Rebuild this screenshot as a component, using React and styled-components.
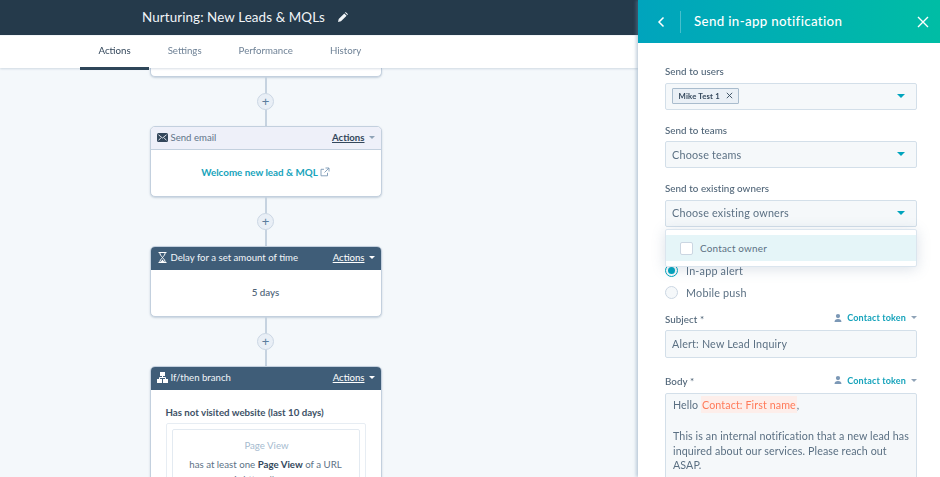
import React from "react";
import styled, { createGlobalStyle } from "styled-components";

const Global = createGlobalStyle`
  html, body { margin: 0; padding: 0; background: #f4f8fb; }
  body { font-family: "Lato", "Liberation Sans", sans-serif; color: #33475b; }
  * { box-sizing: border-box; }
`;

const Page = styled.div`
  width: 940px; height: 477px; overflow: hidden; display: flex; filter: blur(0.35px);
`;
const Main = styled.div`
  width: 638px; flex: none; display: flex; flex-direction: column; height: 100%;
`;
const TopBar = styled.header`
  height: 35px; flex: none; background: #253a4b; color: #f1f5f8; display: flex; align-items: center;
  padding-left: 142px; gap: 13px; font-size: 13.4px; letter-spacing: 0.1px; padding-bottom: 1px;
`;
const Tabs = styled.nav`
  height: 33px; flex: none; background: #fff; display: flex; padding-left: 80px;
  box-shadow: 0 1px 2px rgba(80,110,140,.22); position: relative; z-index: 2; border-top: 1px solid #f2f5f8;
`;
const Tab = styled.div`
  padding: 0 18.5px; font-size: 9.7px; line-height: 28px; height: 34px; white-space: nowrap;
  color: ${p => p.$active ? "#33475b" : "#6f8296"};
  border-bottom: 3px solid ${p => p.$active ? "#2f4659" : "transparent"};
`;
const Canvas = styled.main`
  flex: 1; min-height: 0; overflow: hidden; background: #f4f8fb; display: flex; flex-direction: column;
  align-items: flex-start; padding-left: 149.5px;
`;
const Flow = styled.div`
  width: 232px; display: flex; flex-direction: column; align-items: center;
`;
const Card = styled.section`
  width: 232px; flex: none; background: #fff; border: 1px solid #c3d0de; border-radius: 5px;
  box-shadow: 0 1px 2px rgba(90,120,150,.3); overflow: hidden;
`;
const StubCard = styled(Card)`
  height: 9px; border-top: 0; border-radius: 0 0 5px 5px;
`;
const CardHead = styled.div`
  height: 23px; display: flex; align-items: center; padding: 0 6px; gap: 3px; font-size: 9.6px; padding-bottom: 2px;
  background: ${p => p.$dark ? "#3f5d78" : "#eef0f9"};
  color: ${p => p.$dark ? "#f1f5f8" : "#5f7488"};
  border-bottom: 1px solid ${p => p.$dark ? "#3f5d78" : "#c3d0de"};
`;
const HeadTitle = styled.span`
  flex: 1; white-space: nowrap;
`;
const HeadActions = styled.span`
  font-size: 9.6px; text-decoration: underline; display: flex; align-items: center; margin-right: 1px;
  font-weight: ${p => p.$dark ? 400 : 700};
  color: ${p => p.$dark ? "#fff" : "#33475b"};
`;
const Caret = styled.i`
  display: inline-block; width: 0; height: 0; flex: none; border: ${p => p.$s || 3}px solid transparent; border-bottom: 0;
  border-top-color: ${p => p.$c || "#fff"};
`;
const CardBody = styled.div`
  height: 46px; display: flex; align-items: center; justify-content: center; gap: 2px; font-size: 9.8px;
  padding-bottom: 2px; color: ${p => p.$link ? "#16a3bb" : "#4d6276"}; font-weight: ${p => p.$link ? 700 : 500};
`;
const Connector = styled.div`
  width: 2px; height: 49px; background: #c6d3e0; display: flex; align-items: center; justify-content: center; flex: none;
`;
const Plus = styled.span`
  width: 17px; height: 17px; flex: none; border-radius: 50%; background: #e9eff6; border: 1px solid #cbd7e4;
  display: flex; align-items: center; justify-content: center; color: #5b7d9d; font-size: 13px; line-height: 1;
  font-family: "Liberation Sans", sans-serif;
`;
const BranchBody = styled.div`
  padding: 16px 15px 0; height: 200px;
`;
const BranchTitle = styled.div`
  font-size: 9.7px; font-weight: 700; color: #3d5166; margin-bottom: 5px; white-space: nowrap;
`;
const Outer = styled.div`
  border: 1px solid #e7edf3; border-radius: 2px; padding: 5px;
`;
const Inner = styled.div`
  border: 1px solid #e3eaf1; border-radius: 2px; text-align: center; padding: 9px 4px; font-size: 9.7px; color: #5d7286;
  height: 120px;
`;
const Muted = styled.div`
  color: #a6bbcf; margin-bottom: 7px; padding-left: 2px;
`;
const Line = styled.div`
  margin-bottom: 3px; white-space: nowrap; strong { color: #33475b; font-weight: 700; }
`;
const Panel = styled.aside`
  width: 302px; flex: none; height: 100%; background: #fff; display: flex; flex-direction: column;
  box-shadow: -2px 0 3px rgba(110,140,170,.4); position: relative; z-index: 3;
`;
const PanelHead = styled.header`
  height: 43px; flex: none; background: linear-gradient(90deg, #00a4bd, #00bda5); color: #fff;
  display: flex; align-items: center; padding-left: 19px; padding-right: 11px;
`;
const Divider = styled.span`
  width: 1px; height: 22px; background: rgba(255,255,255,.28); margin: 0 13px 0 15px;
`;
const PanelTitle = styled.h1`
  flex: 1; margin: 0 0 2px; font-size: 13.3px; font-weight: 500; letter-spacing: .35px; white-space: nowrap;
`;
const PanelBody = styled.div`
  flex: 1; min-height: 0; overflow: hidden; padding: 22px 23px 0 27px; position: relative;
`;
const Label = styled.label`
  display: flex; justify-content: space-between; align-items: center; font-size: 9.8px; color: #4f6477; height: 12px;
  margin-bottom: 5.5px; font-weight: 500; letter-spacing: .05px;
`;
const Select = styled.div`
  height: 27px; background: #f5f8fa; border: 1px solid #d3dfe9; border-radius: 2px; display: flex; align-items: center;
  padding: 0 11px 1px 6px; font-size: 10.8px; color: #5b7083; margin-bottom: 14px; letter-spacing: .2px;
`;
const SelectValue = styled.div`
  flex: 1; display: flex; align-items: center;
`;
const Chip = styled.span`
  height: 16px; border: 1px solid #a9bccd; background: #eaf0f6; border-radius: 1px; display: inline-flex; align-items: center;
  padding: 0 5px 0 5.5px; gap: 6px; font-size: 7.7px; font-weight: 700; color: #33475b;
`;
const Menu = styled.div`
  position: absolute; left: 27px; top: 186px; width: 252px; height: 38px; background: #fff; padding: 5px 0;
  border: 1px solid #dbe5ee; border-radius: 2px; box-shadow: 0 2px 14px rgba(90,120,150,.22); z-index: 2;
`;
const MenuItem = styled.div`
  height: 26px; background: #e5f5f8; display: flex; align-items: center; padding-left: 14px; gap: 7px; font-size: 9.9px; color: #5b7083;
  letter-spacing: .2px;
`;
const Check = styled.span`
  width: 13px; height: 13px; background: #fff; border: 1px solid #cbd6e2; border-radius: 2px;
`;
const Radios = styled.div`
  display: flex; flex-direction: column; gap: 8px; margin-top: 37px; margin-bottom: 13px;
`;
const Radio = styled.div`
  display: flex; align-items: center; gap: 8px; height: 14px; font-size: 10.8px; color: #5b7083; letter-spacing: .2px;
`;
const Dot = styled.span`
  width: 13px; height: 13px; border-radius: 50%; display: flex; align-items: center; justify-content: center; background: #f5f8fa;
  border: 1px solid ${p => p.$on ? "#00a4bd" : "#cbd6e2"};
  &::after { content: ""; width: 7px; height: 7px; border-radius: 50%; background: ${p => p.$on ? "#00a4bd" : "transparent"}; }
`;
const Token = styled.span`
  display: inline-flex; align-items: center; gap: 5px; color: #16a3bb; font-weight: 700; font-size: 9px; letter-spacing: .15px;
  margin-top: -2px;
`;
const InputBox = styled.div`
  height: 28px; background: #f5f8fa; border: 1px solid #d3dfe9; border-radius: 2px; display: flex; align-items: center;
  padding: 0 6px 1px; font-size: 10.7px; color: #5b7083; margin-bottom: 17px; letter-spacing: .2px;
`;
const TextBox = styled.div`
  background: #f5f8fa; border: 1px solid #d3dfe9; border-radius: 2px; padding: 4px 2px 4px 7px; font-size: 10.7px; color: #5b7083;
  line-height: 14.7px; height: 110px; letter-spacing: .1px;
`;
const Mention = styled.span`
  background: #fdeeea; color: #ff7a59; padding: 2px 1px; font-size: 10.7px;
`;
const Spacer = styled.div`
  height: 14.7px; margin-top: 2px;
`;

const Arrow = () => <Caret $s={4} $c="#00a4bd" />;
const Person = () => (
  <svg width="8" height="10" viewBox="0 0 9 10" fill="#7c98b6"><circle cx="4.5" cy="2.8" r="2.4"/><path d="M.6 9.6c0-2.600 1.400-3.600 3.900-3.600s3.900 1 3.900 3.600z"/></svg>
);
const Mail = () => (
  <svg width="11" height="9" viewBox="0 0 11 9"><rect width="11" height="9" rx="1.500" fill="#33475b"/><path d="M1.500 1.800 5.500 5l4-3.200M1.500 7.400l2.600-2.800M9.500 7.400 6.900 4.600" stroke="#eef0f9" strokeWidth=".9" fill="none"/></svg>
);
const Hourglass = () => (
  <svg width="11" height="11" viewBox="0 0 11 11" fill="none" stroke="#fff" strokeWidth="1"><path d="M1.500.5h8M1.500 10.500h8M2.800.5c0 2.300 1.500 3.500 2.700 5 1.200-1.500 2.700-2.700 2.700-5M2.800 10.500c0-2.300 1.500-3.500 2.700-5 1.200 1.500 2.700 2.700 2.700 5"/><path d="M3.600 10h3.800L5.500 7.500z" fill="#fff" stroke="none"/></svg>
);
const Branch = () => (
  <svg width="11" height="11" viewBox="0 0 11 11" fill="none" stroke="#fff"><rect x="3.500" y=".5" width="4" height="3" fill="#fff"/><rect x=".5" y="7.500" width="4" height="3" fill="#fff"/><rect x="6.500" y="7.500" width="4" height="3" fill="#fff"/><path d="M5.500 3.500v2M2.500 7.500v-2h6v2"/></svg>
);
const External = () => (
  <svg width="10" height="10" viewBox="0 0 10 10" fill="none" stroke="#7c98b6" strokeWidth=".9"><path d="M7.500 5.800v3h-6.500v-6.500h3M5.500 1h3.500v3.500M9 1 4.500 5.500"/></svg>
);
const Pencil = () => (
  <svg width="10" height="10" viewBox="0 0 10 10" fill="#f1f5f8"><path d="M0 10l.7-3L6.300 1.400l2.300 2.300L3 9.300zM7 .7 7.700 0 10 2.300l-.7.7z"/></svg>
);
const Back = () => (
  <svg width="8" height="12" viewBox="0 0 8 12" fill="none" stroke="#fff" strokeWidth="1.500"><path d="M6.500 1.500 2 6l4.500 4.500"/></svg>
);
const Close = () => (
  <svg width="12" height="12" viewBox="0 0 12 12" fill="none" stroke="#fff" strokeWidth="1.400"><path d="M1 1l10 10M11 1 1 11"/></svg>
);
const ChipX = () => (
  <svg width="7" height="7" viewBox="0 0 7 7" fill="none" stroke="#33475b" strokeWidth=".9"><path d="M.8.800l5.400 5.400M6.200.800.8 6.200"/></svg>
);

const Head = ({ dark, icon, title }) => (
  <CardHead $dark={dark}>
    {icon}
    <HeadTitle>{title}</HeadTitle>
    <HeadActions $dark={dark}>Actions</HeadActions>
    <Caret $c={dark ? "#fff" : "#8fa3b7"} />
  </CardHead>
);
const Link = () => <Connector><Plus>+</Plus></Connector>;

export default function App() {
  return (
    <>
      <Global />
      <Page>
        <Main>
          <TopBar>Nurturing: New Leads &amp; MQLs <Pencil /></TopBar>
          <Tabs>
            <Tab $active>Actions</Tab>
            <Tab>Settings</Tab>
            <Tab>Performance</Tab>
            <Tab>History</Tab>
          </Tabs>
          <Canvas>
            <Flow>
              <StubCard />
              <Link />
              <Card>
                <Head icon={<Mail />} title="Send email" />
                <CardBody $link>Welcome new lead &amp; MQL <External /></CardBody>
              </Card>
              <Link />
              <Card>
                <Head dark icon={<Hourglass />} title="Delay for a set amount of time" />
                <CardBody>5 days</CardBody>
              </Card>
              <Link />
              <Card>
                <Head dark icon={<Branch />} title="If/then branch" />
                <BranchBody>
                  <BranchTitle>Has not visited website (last 10 days)</BranchTitle>
                  <Outer>
                    <Inner>
                      <Muted>Page View</Muted>
                      <Line>has at least one <strong>Page View</strong> of a URL</Line>
                      <Line>is https://www</Line>
                    </Inner>
                  </Outer>
                </BranchBody>
              </Card>
            </Flow>
          </Canvas>
        </Main>
        <Panel>
          <PanelHead>
            <Back />
            <Divider />
            <PanelTitle>Send in-app notification</PanelTitle>
            <Close />
          </PanelHead>
          <PanelBody>
            <Label>Send to users</Label>
            <Select>
              <SelectValue><Chip>Mike Test 1 <ChipX /></Chip></SelectValue>
              <Arrow />
            </Select>
            <Label>Send to teams</Label>
            <Select><SelectValue>Choose teams</SelectValue><Arrow /></Select>
            <Label>Send to existing owners</Label>
            <Select><SelectValue>Choose existing owners</SelectValue><Arrow /></Select>
            <Menu><MenuItem><Check /> Contact owner</MenuItem></Menu>
            <Radios>
              <Radio><Dot $on /> In-app alert</Radio>
              <Radio><Dot /> Mobile push</Radio>
            </Radios>
            <Label>Subject * <Token><Person /> Contact token <Caret $c="#8fa3b7" /></Token></Label>
            <InputBox>Alert: New Lead Inquiry</InputBox>
            <Label>Body * <Token><Person /> Contact token <Caret $c="#8fa3b7" /></Token></Label>
            <TextBox>
              Hello <Mention>Contact: First name</Mention>,
              <Spacer />
              This is an internal notification that a new lead has inquired about our services. Please reach out ASAP.
            </TextBox>
          </PanelBody>
        </Panel>
      </Page>
    </>
  );
}
